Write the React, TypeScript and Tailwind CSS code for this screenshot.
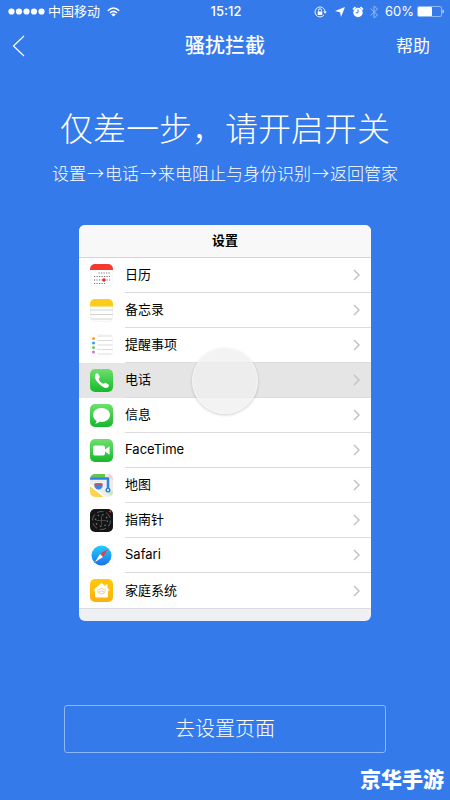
import type { ReactNode } from "react";

function CalendarIcon() {
  return (
    <svg viewBox="0 0 46 46" className="size-[23px]">
      <rect x=".5" y=".5" width="45" height="45" rx="10" fill="#fff" stroke="#ededed" />
      <path d="M0 12V10A10 10 0 0 1 10 0H36A10 10 0 0 1 46 10V12Z" fill="#f7382f" />
      <g stroke="#777" strokeWidth="2" strokeDasharray="2.5 2.5">
        <path d="M17 18H40M8 25H40M8 32H40M8 39H30" />
      </g>
      <circle cx="28" cy="32" r="3.5" fill="#f5222d" />
    </svg>
  );
}

function NotesIcon() {
  return (
    <svg viewBox="0 0 46 46" className="size-[23px]">
      <rect x=".5" y=".5" width="45" height="45" rx="10" fill="#fdfdfc" stroke="#e5e5e5" />
      <path d="M0 15V10A10 10 0 0 1 10 0H36A10 10 0 0 1 46 10V15Z" fill="#fccb1c" />
      <path d="M0 22H46M0 31H46M2 40H44" stroke="#c9c9c9" strokeWidth="1.6" />
    </svg>
  );
}

function RemindersIcon() {
  return (
    <svg viewBox="0 0 46 46" className="size-[23px]">
      <rect x=".5" y=".5" width="45" height="45" rx="10" fill="#fff" stroke="#efefef" />
      <path d="M15 4H43M15 13H45M15 22H45M15 31H45M15 40H43" stroke="#cfcfcf" strokeWidth="1.5" />
      <circle cx="7" cy="9" r="3" fill="#f7a12b" />
      <circle cx="7" cy="18" r="3" fill="#2ea4ea" />
      <circle cx="7" cy="27" r="3" fill="#62cf4a" />
      <circle cx="7" cy="36" r="3" fill="#c977dd" />
    </svg>
  );
}

function GreenTile({ id, children }: { id: string; children: ReactNode }) {
  return (
    <svg viewBox="0 0 46 46" className="size-[23px]">
      <linearGradient id={id} x1="0" y1="0" x2="0" y2="1">
        <stop offset="0" stopColor="#6ee06c" />
        <stop offset="1" stopColor="#15b92c" />
      </linearGradient>
      <rect width="46" height="46" rx="10" fill={`url(#${id})`} />
      {children}
    </svg>
  );
}

function PhoneIcon() {
  return (
    <GreenTile id="phone">
      <path
        d="M11 10C13 7.500 15.500 8 17 10.500L19 14C20 16 19.500 17.500 17.500 19.500C18 24 22.500 28.500 27 29.500C29 27.500 30.500 27 32.500 28L36 30.500C38.500 32 38.500 34 36.500 36C32.500 40 26.500 37.500 20 31.500C12 24 7 15.500 11 10Z"
        fill="#fff"
      />
    </GreenTile>
  );
}

function MessagesIcon() {
  return (
    <GreenTile id="messages">
      <path
        d="M23 8C13 8 6 14 6 22C6 27 9 31 13 33.500C13 36 12 38 10 39.500C14 39.500 17 37.500 18.500 35.700C30 37.500 40 31 40 22C40 14 33 8 23 8Z"
        fill="#fff"
      />
    </GreenTile>
  );
}

function FaceTimeIcon() {
  return (
    <GreenTile id="facetime">
      <rect x="6" y="13" width="24" height="20" rx="4" fill="#fff" />
      <path d="M30 21L39 14.500V31.500L30 25Z" fill="#fff" />
    </GreenTile>
  );
}

function MapsIcon() {
  return (
    <svg viewBox="0 0 46 46" className="size-[23px]">
      <clipPath id="map">
        <rect width="46" height="46" rx="10" />
      </clipPath>
      <g clipPath="url(#map)">
        <rect width="46" height="46" fill="#f0eee8" />
        <path d="M0 0H30V7H0Z" fill="#63c452" />
        <path d="M35 0H46V14Z" fill="#f7cfd2" />
        <path d="M0 24L28 46H0Z" fill="#fbd54f" />
        <path d="M0 22L32 48" stroke="#fff" strokeWidth="3" />
        <path d="M26 32L46 46V34Z" fill="#cce9bd" />
        <path d="M0 9H36V30" fill="none" stroke="#2c83e5" strokeWidth="5" />
        <circle cx="36" cy="32" r="5" fill="#2c83e5" />
        <circle cx="36" cy="32" r="2" fill="#fff" />
        <path d="M8 20L12 18Q17 20 22 18L26 20Q27 30 17 32Q7 30 8 20Z" fill="#3988df" stroke="#fff" />
        <path d="M9 21Q17 18 25 21" fill="none" stroke="#e64848" strokeWidth="3" />
      </g>
    </svg>
  );
}

function CompassIcon() {
  return (
    <svg viewBox="0 0 46 46" className="size-[23px]">
      <rect width="46" height="46" rx="10" fill="#141516" />
      <circle cx="23" cy="23" r="18" fill="none" stroke="#777" strokeWidth="1.500" strokeDasharray="13 5.800" />
      <circle cx="23" cy="23" r="12" fill="none" stroke="#777" strokeWidth="2.500" strokeDasharray="3 6.400" />
      <path d="M23 13V33M13 23H33" stroke="#555" strokeWidth="1.500" />
      <path d="M37 4L42 3L42 8Z" fill="#e83a32" />
    </svg>
  );
}

function SafariIcon() {
  return (
    <svg viewBox="0 0 46 46" className="size-[23px]">
      <linearGradient id="safari" x1="0" y1="0" x2="0" y2="1">
        <stop offset="0" stopColor="#1fd1fb" />
        <stop offset="1" stopColor="#1e6ff0" />
      </linearGradient>
      <rect x=".5" y=".5" width="45" height="45" rx="10" fill="#fff" stroke="#f2f2f2" />
      <circle cx="23" cy="23" r="20" fill="url(#safari)" />
      <path d="M36 10L20 20L26 26Z" fill="#f13b34" />
      <path d="M10 36L20 20L26 26Z" fill="#fff" />
    </svg>
  );
}

function HomeIcon() {
  return (
    <svg viewBox="0 0 46 46" className="size-[23px]">
      <linearGradient id="home" x1="0" y1="0" x2="0" y2="1">
        <stop offset="0" stopColor="#ffc90c" />
        <stop offset="1" stopColor="#fdb00d" />
      </linearGradient>
      <rect width="46" height="46" rx="10" fill="url(#home)" />
      <path
        d="M23 8L31 14.500V11H35V18L39 22V23H36V35Q36 37 34 37H12Q10 37 10 35V23H7V22Z"
        fill="#fff"
      />
      <path d="M15 22Q23 16 31 22M18 26Q23 22 28 26M15 23Q16 29 23 30Q30 29 31 23" fill="none" stroke="#fbc04a" strokeWidth="1.600" />
    </svg>
  );
}

const rows: { label: string; icon: ReactNode; active?: boolean }[] = [
  { label: "日历", icon: <CalendarIcon /> },
  { label: "备忘录", icon: <NotesIcon /> },
  { label: "提醒事项", icon: <RemindersIcon /> },
  { label: "电话", icon: <PhoneIcon />, active: true },
  { label: "信息", icon: <MessagesIcon /> },
  { label: "FaceTime", icon: <FaceTimeIcon /> },
  { label: "地图", icon: <MapsIcon /> },
  { label: "指南针", icon: <CompassIcon /> },
  { label: "Safari", icon: <SafariIcon /> },
  { label: "家庭系统", icon: <HomeIcon /> },
];

const steps = ["设置", "→", "电话", "→", "来电阻止与身份识别", "→", "返回管家"];

function StatusBar() {
  return (
    <div className="grid h-[23px] grid-cols-[1fr_auto_1fr] items-center pr-[6px] pl-[8px] text-[13px] leading-none">
      <div className="flex items-center gap-[3px]">
        <svg viewBox="0 0 37 7" className="h-[7px] w-[37px]" fill="#fff">
          <circle cx="3.5" cy="3.5" r="3.1" />
          <circle cx="11" cy="3.5" r="3.1" />
          <circle cx="18.500" cy="3.5" r="3.1" />
          <circle cx="26" cy="3.5" r="3.1" />
          <circle cx="33.500" cy="3.5" r="3.1" />
        </svg>
        <span>中国移动</span>
        <svg viewBox="0 0 26 20" className="ml-1 h-[10px] w-[13px]" fill="none" stroke="#fff" strokeWidth="3">
          <path d="M1.500 7.500Q13 -3.500 24.500 7.500M6 12Q13 5.500 20 12" />
          <path d="M13 19L8.500 14.800Q13 11.500 17.500 14.800Z" fill="#fff" stroke="none" />
        </svg>
      </div>
      <span className="font-medium">15:12</span>
      <div className="flex items-center justify-end">
        <svg viewBox="0 0 26 24" className="mr-2 h-3 w-[13px]" fill="none" stroke="#fff" strokeWidth="1.800">
          <path d="M20 18A10 10 0 1 1 22 11" />
          <path d="M18.500 11H25.500L22 15.500Z" fill="#fff" stroke="none" />
          <rect x="7.500" y="11" width="9" height="7" fill="#fff" stroke="none" />
          <path d="M9 11V8.500A3 3 0 0 1 15 8.500V11" />
        </svg>
        <svg viewBox="0 0 20 20" className="mr-[7px] size-[10px]" fill="#fff">
          <path d="M20 0L12 20L10 10.500L0 8Z" />
        </svg>
        <svg viewBox="0 0 24 24" className="mr-[6px] size-3">
          <circle cx="12" cy="13" r="9.500" fill="#fff" />
          <path d="M2 7L7 2M22 7L17 2" stroke="#fff" strokeWidth="3.500" />
          <path d="M12 7V13.500H7.500" fill="none" stroke="#347aeb" strokeWidth="2" />
        </svg>
        <svg viewBox="0 0 16 28" className="mr-[7px] h-[14px] w-2" fill="none" stroke="#91b9f7" strokeWidth="2">
          <path d="M1 7L15 20L8 26V2L15 8L1 21" />
        </svg>
        <span>60%</span>
        <svg viewBox="0 0 54 22" className="ml-[3px] h-[11px] w-[27px]">
          <rect x="1" y="1" width="48" height="20" rx="3" fill="none" stroke="#a9c8fa" strokeWidth="1.600" />
          <rect x="2" y="2" width="28" height="18" rx="1.500" fill="#fff" />
          <path d="M51 7Q54 8 54 11Q54 14 51 15Z" fill="#c9ddfc" />
        </svg>
      </div>
    </div>
  );
}

export default function App() {
  return (
    <main className="flex min-h-screen flex-col bg-[#347aeb] font-[Inter,'Noto_Sans_CJK_SC',sans-serif] text-white">
      <StatusBar />
      <header className="grid h-[46px] grid-cols-[1fr_auto_1fr] items-center px-3">
        <button type="button" aria-label="返回" className="justify-self-start">
          <svg viewBox="0 0 13 22" className="h-[22px] w-[13px]" fill="none" stroke="#fff" strokeWidth="1.200">
            <path d="M12 1L1.500 11L12 21" />
          </svg>
        </button>
        <h1 className="text-xl leading-6 font-medium">骚扰拦截</h1>
        <button type="button" className="justify-self-end pr-2 text-[17px] leading-6">
          帮助
        </button>
      </header>

      <section className="mt-10 flex flex-col items-center">
        <h2 className="text-[33px] leading-10 font-light whitespace-nowrap">仅差一步，请开启开关</h2>
        <p className="mt-3 flex gap-px font-['Noto_Sans_CJK_SC',sans-serif] text-[17px] leading-6 font-light whitespace-nowrap">
          {steps.map((step, index) => (
            <span key={index}>{step}</span>
          ))}
        </p>
      </section>

      <section className="mx-[79px] mt-10 overflow-hidden rounded-md bg-[#eff0f4] text-[13px] text-black">
        <h3 className="flex h-[33px] items-center justify-center border-b border-[#d5d5d7] bg-[#f8f8f8] font-bold">
          设置
        </h3>
        <ul className="flex h-[351px] flex-col border-b border-[#dcdce0] bg-white">
          {rows.map(({ label, icon, active }, index) => (
            <li
              key={label}
              className={`relative flex flex-1 items-center gap-3 pl-[11px] ${active ? "z-10 bg-[#e5e5e5]" : ""}`}
            >
              {icon}
              <div
                className={`flex flex-1 items-center justify-between self-stretch pr-[11px] ${
                  index < rows.length - 1 ? "border-b border-[#dcdcdf]" : ""
                }`}
              >
                <span>{label}</span>
                <svg viewBox="0 0 7 12" className="h-3 w-[7px]" fill="none" stroke="#c3c3c7" strokeWidth="1.500">
                  <path d="M1 1L6 6L1 11" />
                </svg>
              </div>
              {active && (
                <span className="absolute top-1/2 left-1/2 size-[66px] -translate-x-1/2 -translate-y-1/2 rounded-full border border-[#f5f5f5] bg-[#efefef]/75 shadow-[0_1px_3px_rgba(0,0,0,0.2)]" />
              )}
            </li>
          ))}
        </ul>
        <div className="h-3" />
      </section>

      <button
        type="button"
        className="mx-16 mt-[84px] h-12 rounded-[3px] border border-[#8db8fb] text-xl font-light"
      >
        去设置页面
      </button>

      <footer className="mt-auto pr-[6px] pb-[6px] text-right text-[21px] leading-7 font-black">京华手游</footer>
    </main>
  );
}
